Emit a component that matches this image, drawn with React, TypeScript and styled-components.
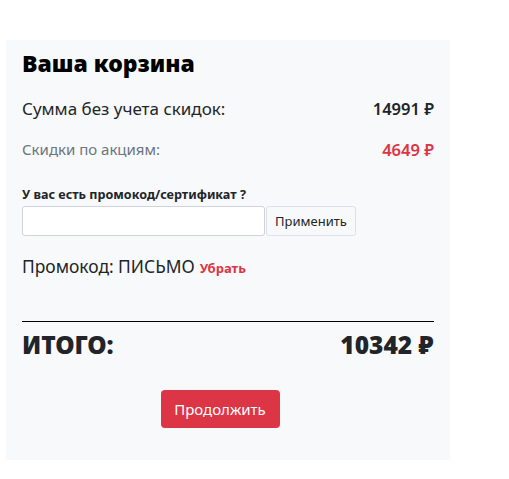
import React from 'react';
import styled, { createGlobalStyle } from 'styled-components';

const GlobalStyle = createGlobalStyle`
    body {
        margin: 0;
        background: #fff;
        font-family: "Noto Sans", "Open Sans", sans-serif;
        color: #212529;
    }
`;

const Page = styled.div`
    padding: 40px 0 0 6px;
`;

/* 카드 */
const Card = styled.div`
    width: 444px;
    height: 420px;
    box-sizing: border-box;
    background: #f8f9fa;
    padding: 8px 16px 0;
    display: flex;
    flex-direction: column;
`;

const Title = styled.h2`
    margin: 0;
    font-size: 23px;
    font-weight: 900;
    color: #000;
    line-height: 30px;
`;

const Row = styled.div`
    display: flex;
    justify-content: space-between;
    align-items: center;
    margin-top: ${props => props.$top}px;
    height: 24px;
`;

const Label = styled.span`
    font-size: ${props => (props.$muted ? 15 : 17)}px;
    color: ${props => (props.$muted ? '#6c757d' : '#212529')};
`;

const Price = styled.span`
    font-size: 16.5px;
    font-weight: 600;
    color: ${props => (props.$red ? '#dc3545' : '#212529')};
`;

const PromoLabel = styled.div`
    margin-top: 25px;
    font-size: 12.6px;
    font-weight: 700;
    line-height: 18px;
`;

const PromoForm = styled.div`
    display: flex;
    margin-top: 2px;
`;

const Input = styled.input`
    width: 243px;
    height: 30px;
    box-sizing: border-box;
    border: 1px solid #ced4da;
    border-radius: 3px;
    background: #fff;
    outline: none;
`;

const ApplyButton = styled.button`
    margin-left: 1px;
    height: 30px;
    width: 90px;
    box-sizing: border-box;
    border: 1px solid #dee2e6;
    border-radius: 3px;
    background: #f8f9fa;
    font-family: inherit;
    font-size: 13px;
    color: #212529;
    padding: 0;
`;

const Applied = styled.div`
    margin-top: 18px;
    font-size: 17.4px;
    line-height: 24px;
    display: flex;
    align-items: baseline;
    gap: 5px;
`;

const Remove = styled.span`
    font-size: 13px;
    font-weight: 700;
    color: #dc3545;
`;

const Divider = styled.hr`
    margin: 41px 0 0;
    border: 0;
    border-top: 1px solid #000;
`;

const Total = styled.div`
    display: flex;
    justify-content: space-between;
    align-items: center;
    margin-top: 9px;
    font-size: 24.5px;
    font-weight: 900;
    line-height: 28px;
    color: #212529;
`;

const Footer = styled.div`
    display: flex;
    justify-content: center;
    margin-top: 31px;
`;

const NextButton = styled.button`
    width: 119px;
    height: 38px;
    border: 0;
    border-radius: 4px;
    background: #dc3545;
    color: #fff;
    font-family: inherit;
    font-size: 15px;
    margin-right: 16px;
`;

const App = () => {
    return (
        <Page>
            <GlobalStyle />
            <Card>
                <Title>Ваша корзина</Title>
                <Row $top={18}>
                    <Label>Сумма без учета скидок:</Label>
                    <Price>14991 ₽</Price>
                </Row>
                <Row $top={17}>
                    <Label $muted>Скидки по акциям:</Label>
                    <Price $red>4649 ₽</Price>
                </Row>
                <PromoLabel>У вас есть промокод/сертификат ?</PromoLabel>
                <PromoForm>
                    <Input type="text" />
                    <ApplyButton>Применить</ApplyButton>
                </PromoForm>
                <Applied>
                    Промокод: ПИСЬМО <Remove>Убрать</Remove>
                </Applied>
                <Divider />
                <Total>
                    <span>ИТОГО:</span>
                    <span>10342 ₽</span>
                </Total>
                <Footer>
                    <NextButton>Продолжить</NextButton>
                </Footer>
            </Card>
        </Page>
    );
};

export default App;
